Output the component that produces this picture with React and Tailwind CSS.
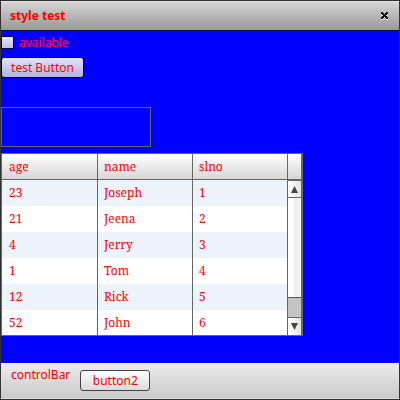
const rows = [
  ["23", "Joseph", "1"],
  ["21", "Jeena", "2"],
  ["4", "Jerry", "3"],
  ["1", "Tom", "4"],
  ["12", "Rick", "5"],
  ["52", "John", "6"],
];

function TitleBar() {
  return (
    <header className="flex h-[30px] shrink-0 items-center justify-between border-t border-b border-t-[#e4e4e4] border-b-[#101030] bg-linear-to-b from-[#d6d6d6] to-[#989898] pr-[9px] pl-[9px]">
      <h1 className="text-xs font-bold text-[#ff0000]">style test</h1>
      <button type="button" aria-label="Close" className="flex h-4 w-[10px] items-center justify-center">
        <svg width="10" height="10" viewBox="0 0 10 10" shapeRendering="crispEdges" aria-hidden="true">
          <path d="M1 2h2v1h1v1h1V3h1V2h2v2H7v1H6v1h1v1h1v2H6V8H5V7H4v1H3v1H1V7h1V6h1V5H2V4H1z" fill="#f5f5f5" />
          <path d="M1 1h2v1h1v1h1V2h1V1h2v2H7v1H6v1h1v1h1v2H6V7H5V6H4v1H3v1H1V6h1V5h1V4H2V3H1z" fill="#151518" />
        </svg>
      </button>
    </header>
  );
}

function ScrollBar() {
  return (
    <div className="flex w-[13px] flex-col">
      <div className="h-[26px] border-b border-[#666] bg-linear-to-b from-white to-[#d6d6d6]" />
      <button type="button" aria-label="Scroll up" className="flex h-[18px] items-center justify-center border-t border-b border-[#666] bg-linear-to-r from-white to-[#e2e2e2]">
        <svg width="7" height="7" viewBox="0 0 8 8" aria-hidden="true">
          <path d="M4 0l4 8H0z" fill="#444" />
        </svg>
      </button>
      <div className="flex grow flex-col bg-[#c4c4c4]">
        <div className="h-[100px] border-b border-[#555] bg-linear-to-r from-white from-45% via-[#eeeeee] via-50% to-[#f4f4f4]" />
      </div>
      <button type="button" aria-label="Scroll down" className="flex h-[18px] items-center justify-center border-t border-[#666] bg-linear-to-r from-white to-[#e2e2e2]">
        <svg width="7" height="7" viewBox="0 0 8 8" aria-hidden="true">
          <path d="M0 0h8L4 8z" fill="#444" />
        </svg>
      </button>
    </div>
  );
}

function DataGrid() {
  return (
    <div className="mt-[6px] flex w-[302px] border border-r-2 border-[#666] bg-white font-['Noto_Serif','Droid_Serif','Liberation_Serif',serif] text-xs text-[#ff0000]">
      <table className="grow table-fixed border-separate border-spacing-0 text-left">
        <thead>
          <tr className="h-[26px] bg-linear-to-b from-white to-[#d6d6d6]">
            {["age", "name", "slno"].map((label) => (
              <th key={label} scope="col" className="w-[95px] border-r border-b border-[#666] py-0 pr-0 pl-[6px] font-normal first:w-24 first:pl-[7px]">
                {label}
              </th>
            ))}
          </tr>
        </thead>
        <tbody>
          {rows.map((row) => (
            <tr key={row[2]} className="h-[26px] last:h-[25px] odd:bg-[#edf3fb] even:bg-white">
              {row.map((cell, i) => (
                <td key={i} className="border-r border-[#666] py-0 pr-0 pl-[6px] first:pl-[7px]">
                  {cell}
                </td>
              ))}
            </tr>
          ))}
        </tbody>
      </table>
      <ScrollBar />
    </div>
  );
}

export default function App() {
  return (
    <div className="flex min-h-screen flex-col border border-[#333] bg-[#0000ff] font-['Noto_Sans','Open_Sans',sans-serif] text-xs text-[#ff0000]">
      <TitleBar />
      <main className="flex grow flex-col items-start pt-1">
        <label className="flex h-4 items-center gap-[5px] text-[#ff0040] text-shadow-[0_0_1px_#d00050]">
          <input
            type="checkbox"
            className="mb-[2px] size-[13px] appearance-none border border-[#00004c] bg-linear-to-b from-[#e4e4fa] to-[#c0c0e4]"
          />
          available
        </label>
        <button type="button" className="mt-[6px] h-[21px] w-[83px] rounded-[3px] border border-[#000038] bg-linear-to-b from-[#e3e3fa] to-[#b3b3dd]">
          test Button
        </button>
        <input type="text" aria-label="Text" className="mt-[29px] h-10 w-[150px] border border-[#666] bg-transparent px-1 outline-none" />
        <DataGrid />
      </main>
      <footer className="flex h-9 shrink-0 items-start gap-[10px] border-t border-b border-t-[#f4f4f4] border-b-[#dcdcdc] bg-linear-to-b from-[#ebebeb] to-[#cacaca] pl-[10px]">
        <span className="mt-[3px] leading-4">controlBar</span>
        <button type="button" className="mt-[6px] h-[21px] w-[70px] rounded-[3px] border border-[#444] bg-linear-to-b from-white to-[#dadada]">
          button2
        </button>
      </footer>
    </div>
  );
}
